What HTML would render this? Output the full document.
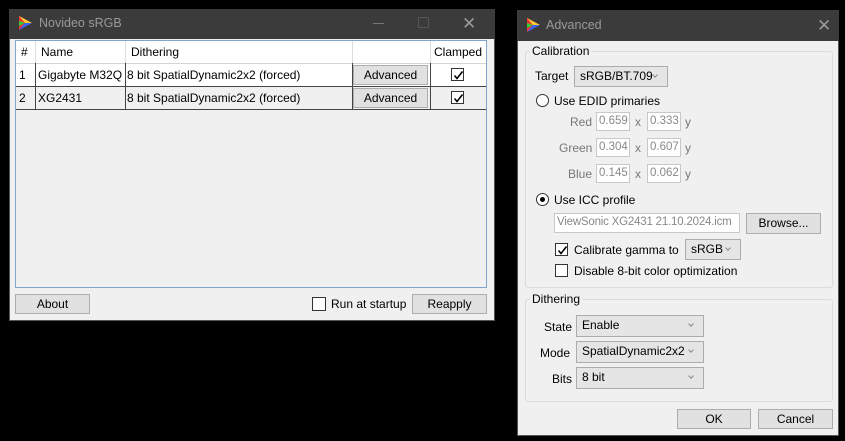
<!DOCTYPE html>
<html><head><meta charset="utf-8"><style>
*{box-sizing:border-box;margin:0;padding:0}
body{width:845px;height:441px;background:#000;position:relative;overflow:hidden;font-family:"Liberation Sans",sans-serif;font-size:12px;color:#000}
.a{position:absolute;white-space:nowrap}
.win{background:#f0f0f0;border:1px solid #555}
.tb{background:#3b3b3b;color:#9a9a9a;font-size:12.5px}
.btn{position:absolute;background:#e1e1e1;border:1px solid #adadad;text-align:center;line-height:18px}
.cell{position:absolute;line-height:22px;padding-left:3px;white-space:nowrap}
.cb{position:absolute;width:13px;height:13px;border:1px solid #333;background:#fff}
.cb svg{position:absolute;left:1px;top:1px}
.dd{position:absolute;background:#e5e5e5;border:1px solid #acacac;padding-left:5px;line-height:19px;white-space:nowrap}
.dd:after{content:"";position:absolute;right:10px;top:6px;width:3px;height:3px;border-right:1px solid #888;border-bottom:1px solid #888;transform:rotate(45deg)}
.tx{position:absolute;background:#fff;border:1px solid #c8c8c8;color:#888;line-height:17px;padding-left:2px;white-space:nowrap;overflow:hidden;font-size:11.5px}
.gl{color:#777}
.grp{position:absolute;border:1px solid #dcdcdc;border-radius:3px}
.lg{position:absolute;background:#f0f0f0;padding:0 2px}
.rad{position:absolute;width:13px;height:13px;border:1px solid #333;border-radius:50%;background:#fff}
</style></head><body>
<svg width="0" height="0" style="position:absolute"><defs><linearGradient id="g" x1="0" y1="0" x2="1" y2="1"><stop offset="0" stop-color="#f44"/><stop offset=".5" stop-color="#4c4"/><stop offset="1" stop-color="#44f"/></linearGradient></defs></svg>
<div class="a win" style="left:9px;top:9px;width:486px;height:312px"></div>
<div class="a tb" style="left:9px;top:9px;width:486px;height:30px"></div>
<svg class="a" style="left:17px;top:15px" width="16" height="16"><polygon points="2,1 15,8 2,15" fill="#e33"/><polygon points="2,1 15,8 8,8" fill="#fc3"/><polygon points="2,15 15,8 8,8" fill="#36f"/><polygon points="2,6 8,8 2,11" fill="#3c3"/></svg>
<div class="a" style="left:39px;top:16px;color:#9a9a9a;font-size:12.5px">Novideo sRGB</div>
<div class="a" style="left:373px;top:23px;width:11px;height:1px;background:#777"></div>
<div class="a" style="left:418px;top:17px;width:11px;height:11px;border:1px solid #555"></div>
<div class="a" style="left:462px;top:14px;color:#9a9a9a;font-size:17px">✕</div>
<div class="a" style="left:15px;top:40px;width:472px;height:248px;border:1px solid #82a5cc;background:#f0f0f0"></div>
<div class="a" style="left:16px;top:41px;width:470px;height:22px;background:#fff"></div>
<div class="a" style="left:16px;top:63px;width:470px;height:46px;background:#fff"></div>
<div class="a" style="left:16px;top:86px;width:470px;height:23px;background:#f0f0f0"></div>
<div class="a" style="left:16px;top:63px;width:470px;height:1px;background:#d5d5d5"></div>
<div class="a" style="left:16px;top:86px;width:470px;height:1px;background:#444"></div>
<div class="a" style="left:16px;top:109px;width:470px;height:1px;background:#444"></div>
<div class="a" style="left:35px;top:41px;width:1px;height:22px;background:#ddd"></div>
<div class="a" style="left:125px;top:41px;width:1px;height:22px;background:#ddd"></div>
<div class="a" style="left:352px;top:41px;width:1px;height:22px;background:#ddd"></div>
<div class="a" style="left:430px;top:41px;width:1px;height:22px;background:#ddd"></div>
<div class="a" style="left:35px;top:63px;width:1px;height:46px;background:#444"></div>
<div class="a" style="left:125px;top:63px;width:1px;height:46px;background:#444"></div>
<div class="a" style="left:352px;top:63px;width:1px;height:46px;background:#444"></div>
<div class="a" style="left:430px;top:63px;width:1px;height:46px;background:#444"></div>
<div class="cell" style="left:18px;top:41px">#</div>
<div class="cell" style="left:38px;top:41px">Name</div>
<div class="cell" style="left:128px;top:41px">Dithering</div>
<div class="cell" style="left:431px;top:41px">Clamped</div>
<div class="cell" style="left:16px;top:64px">1</div>
<div class="cell" style="left:35px;top:64px">Gigabyte M32Q</div>
<div class="cell" style="left:124px;top:64px">8 bit SpatialDynamic2x2 (forced)</div>
<div class="btn" style="left:353px;top:65px;width:75px;height:20px">Advanced</div>
<div class="cb" style="left:451px;top:68px"><svg width="11" height="11"><path d="M1.5 5.5 L4 8.5 L9.5 1.5" stroke="#000" stroke-width="1.6" fill="none"/></svg></div>
<div class="cell" style="left:16px;top:87px">2</div>
<div class="cell" style="left:35px;top:87px">XG2431</div>
<div class="cell" style="left:124px;top:87px">8 bit SpatialDynamic2x2 (forced)</div>
<div class="btn" style="left:353px;top:88px;width:75px;height:20px">Advanced</div>
<div class="cb" style="left:451px;top:91px"><svg width="11" height="11"><path d="M1.5 5.5 L4 8.5 L9.5 1.5" stroke="#000" stroke-width="1.6" fill="none"/></svg></div>
<div class="btn" style="left:15px;top:294px;width:75px;height:20px">About</div>
<div class="cb" style="left:312px;top:297px;width:14px;height:14px"></div>
<div class="a" style="left:331px;top:297px">Run at startup</div>
<div class="btn" style="left:412px;top:294px;width:75px;height:20px">Reapply</div>

<div class="a win" style="left:517px;top:10px;width:322px;height:426px"></div>
<div class="a tb" style="left:517px;top:10px;width:322px;height:31px"></div>
<svg class="a" style="left:525px;top:17px" width="16" height="16"><polygon points="2,1 15,8 2,15" fill="#e33"/><polygon points="2,1 15,8 8,8" fill="#fc3"/><polygon points="2,15 15,8 8,8" fill="#36f"/><polygon points="2,6 8,8 2,11" fill="#3c3"/></svg>
<div class="a" style="left:546px;top:18px;color:#9a9a9a;font-size:12.5px">Advanced</div>
<div class="a" style="left:817px;top:16px;color:#9a9a9a;font-size:17px">✕</div>
<div class="grp" style="left:525px;top:51px;width:308px;height:237px"></div>
<div class="lg" style="left:530px;top:44px">Calibration</div>
<div class="a" style="left:535px;top:69px">Target</div>
<div class="dd" style="left:574px;top:66px;width:94px;height:21px">sRGB/BT.709</div>
<div class="rad" style="left:536px;top:94px"></div>
<div class="a" style="left:554px;top:94px">Use EDID primaries</div>
<div class="a gl" style="left:570px;top:115px">Red</div>
<div class="a gl" style="left:559px;top:141px">Green</div>
<div class="a gl" style="left:568px;top:167px">Blue</div>
<div class="tx" style="left:596px;top:112px;width:34px;height:19px">0.659</div>
<div class="tx" style="left:647px;top:112px;width:34px;height:19px">0.333</div>
<div class="tx" style="left:596px;top:138px;width:34px;height:19px">0.304</div>
<div class="tx" style="left:647px;top:138px;width:34px;height:19px">0.607</div>
<div class="tx" style="left:596px;top:164px;width:34px;height:19px">0.145</div>
<div class="tx" style="left:647px;top:164px;width:34px;height:19px">0.062</div>
<div class="a gl" style="left:635px;top:115px">x</div><div class="a gl" style="left:685px;top:115px">y</div>
<div class="a gl" style="left:635px;top:141px">x</div><div class="a gl" style="left:685px;top:141px">y</div>
<div class="a gl" style="left:635px;top:167px">x</div><div class="a gl" style="left:685px;top:167px">y</div>
<div class="rad" style="left:536px;top:193px"></div>
<div class="a" style="left:540px;top:197px;width:5px;height:5px;border-radius:50%;background:#000"></div>
<div class="a" style="left:554px;top:193px">Use ICC profile</div>
<div class="tx" style="left:554px;top:213px;width:186px;height:20px;padding-left:2px;font-size:11.5px;letter-spacing:-0.2px">ViewSonic XG2431 21.10.2024.icm</div>
<div class="btn" style="left:746px;top:213px;width:75px;height:21px">Browse...</div>
<div class="cb" style="left:555px;top:243px"><svg width="11" height="11"><path d="M1.5 5.5 L4 8.5 L9.5 1.5" stroke="#000" stroke-width="1.6" fill="none"/></svg></div>
<div class="a" style="left:574px;top:243px">Calibrate gamma to</div>
<div class="dd" style="left:685px;top:239px;width:56px;height:21px">sRGB</div>
<div class="cb" style="left:555px;top:264px"></div>
<div class="a" style="left:574px;top:264px">Disable 8-bit color optimization</div>
<div class="grp" style="left:525px;top:299px;width:308px;height:103px"></div>
<div class="lg" style="left:530px;top:292px">Dithering</div>
<div class="a" style="left:544px;top:320px">State</div>
<div class="a" style="left:540px;top:346px">Mode</div>
<div class="a" style="left:552px;top:372px">Bits</div>
<div class="dd" style="left:576px;top:315px;width:128px;height:22px">Enable</div>
<div class="dd" style="left:576px;top:341px;width:128px;height:22px">SpatialDynamic2x2</div>
<div class="dd" style="left:576px;top:367px;width:128px;height:22px">8 bit</div>
<div class="btn" style="left:677px;top:409px;width:74px;height:20px">OK</div>
<div class="btn" style="left:758px;top:409px;width:75px;height:20px">Cancel</div>
</body></html>
